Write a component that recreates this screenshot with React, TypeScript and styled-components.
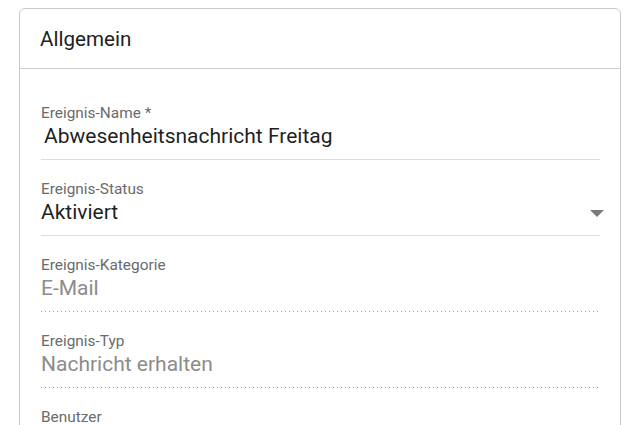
import { createGlobalStyle } from "styled-components";
import styled from "styled-components";

const GlobalStyle = createGlobalStyle`
  html, body {
    margin: 0;
    padding: 0;
    background: #fff;
    font-family: Roboto, "Noto Sans", Arial, sans-serif;
  }
`;

const Page = styled.div`
  padding: 8px 19px 0 19px;
  height: 425px;
  overflow: hidden;
  box-sizing: border-box;
`;

const Card = styled.section`
  border: 1px solid #c9c9c9;
  border-radius: 6px;
  background: #fff;
  width: 602px;
  box-sizing: border-box;
`;

const CardHeader = styled.header`
  height: 59px;
  display: flex;
  align-items: center;
  padding: 0 20px;
  border-bottom: 1px solid #cfcfcf;
  font-size: 20.6px;
  color: #212121;
`;

const CardBody = styled.div`
  padding: 15px 20px 0 21px;
`;

const Field = styled.div<{ $disabled?: boolean }>`
  padding: 21px 0 11px;
  ${({ $disabled }) =>
    $disabled
      ? `
    background-image: linear-gradient(to right, #a0a0a0 0, #a0a0a0 33%, transparent 0);
    background-size: 4px 1px;
    background-repeat: repeat-x;
    background-position: bottom left;
    padding-bottom: 12px;
  `
      : `border-bottom: 1px solid #dedede;`}
`;

const Label = styled.div`
  font-size: 15.4px;
  line-height: 17px;
  color: #6b6b6b;
`;

const ValueRow = styled.div`
  display: flex;
  align-items: center;
  margin-top: 2px;
`;

const Value = styled.div<{ $muted?: boolean; $indent?: boolean }>`
  flex: 1;
  font-size: 21px;
  line-height: 24px;
  color: ${({ $muted }) => ($muted ? "#8c8c8c" : "#1f1f1f")};
  padding-left: ${({ $indent }) => ($indent ? "3px" : "0")};
`;

const Arrow = styled.span`
  width: 0;
  height: 0;
  border-left: 7px solid transparent;
  border-right: 7px solid transparent;
  border-top: 7px solid #7a7a7a;
  margin-right: -4px;
  margin-top: 3px;
`;

export default function App() {
  return (
    <Page>
      <GlobalStyle />
      <Card>
        <CardHeader>Allgemein</CardHeader>
        <CardBody>
          <Field>
            <Label>Ereignis-Name *</Label>
            <ValueRow>
              <Value $indent>Abwesenheitsnachricht Freitag</Value>
            </ValueRow>
          </Field>
          <Field>
            <Label>Ereignis-Status</Label>
            <ValueRow>
              <Value>Aktiviert</Value>
              <Arrow />
            </ValueRow>
          </Field>
          <Field $disabled>
            <Label>Ereignis-Kategorie</Label>
            <ValueRow>
              <Value $muted>E-Mail</Value>
            </ValueRow>
          </Field>
          <Field $disabled>
            <Label>Ereignis-Typ</Label>
            <ValueRow>
              <Value $muted>Nachricht erhalten</Value>
            </ValueRow>
          </Field>
          <Field>
            <Label>Benutzer</Label>
            <ValueRow>
              <Value>&nbsp;</Value>
            </ValueRow>
          </Field>
        </CardBody>
      </Card>
    </Page>
  );
}
